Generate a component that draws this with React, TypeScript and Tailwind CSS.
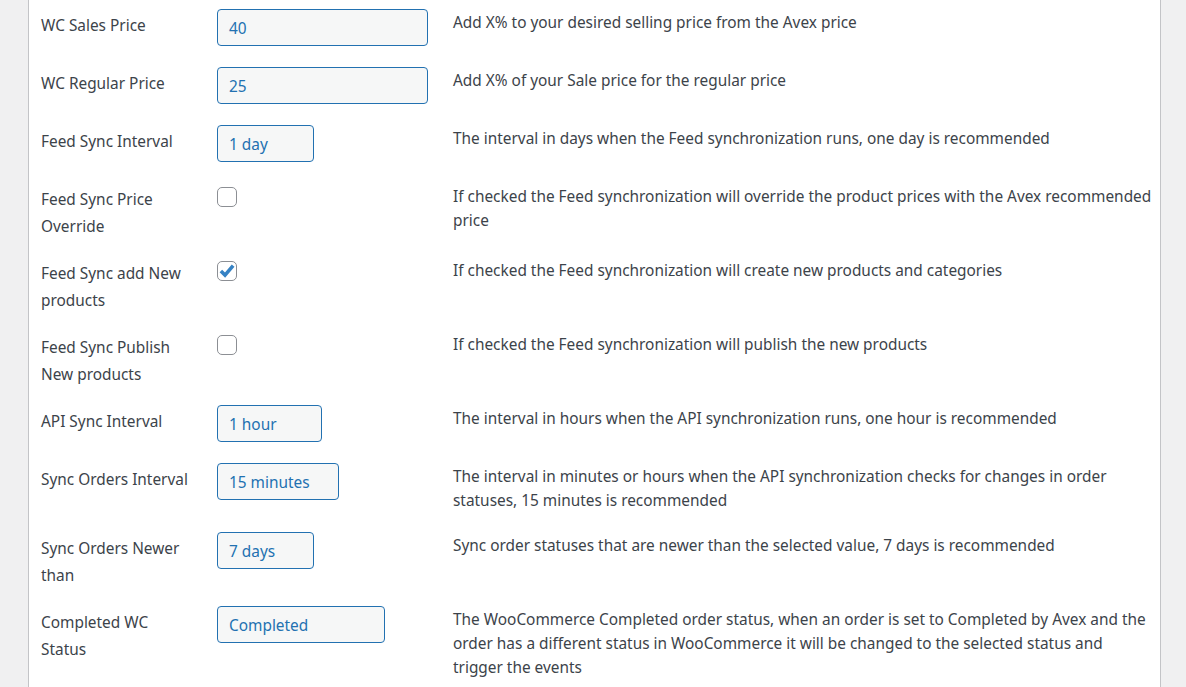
import React from 'react';

type Row = {
  label: string[];
  kind: 'select' | 'checkbox';
  value?: string;
  width?: string;
  checked?: boolean;
  desc: string[];
};

const rows: Row[] = [
  { label: ['WC Sales Price'], kind: 'select', value: '40', width: 'w-[211px]', desc: ['Add X% to your desired selling price from the Avex price'] },
  { label: ['WC Regular Price'], kind: 'select', value: '25', width: 'w-[211px]', desc: ['Add X% of your Sale price for the regular price'] },
  { label: ['Feed Sync Interval'], kind: 'select', value: '1 day', width: 'w-[97px]', desc: ['The interval in days when the Feed synchronization runs, one day is recommended'] },
  {
    label: ['Feed Sync Price', 'Override'],
    kind: 'checkbox',
    checked: false,
    desc: ['If checked the Feed synchronization will override the product prices with the Avex recommended', 'price'],
  },
  { label: ['Feed Sync add New', 'products'], kind: 'checkbox', checked: true, desc: ['If checked the Feed synchronization will create new products and categories'] },
  { label: ['Feed Sync Publish', 'New products'], kind: 'checkbox', checked: false, desc: ['If checked the Feed synchronization will publish the new products'] },
  { label: ['API Sync Interval'], kind: 'select', value: '1 hour', width: 'w-[105px]', desc: ['The interval in hours when the API synchronization runs, one hour is recommended'] },
  {
    label: ['Sync Orders Interval'],
    kind: 'select',
    value: '15 minutes',
    width: 'w-[122px]',
    desc: ['The interval in minutes or hours when the API synchronization checks for changes in order', 'statuses, 15 minutes is recommended'],
  },
  { label: ['Sync Orders Newer', 'than'], kind: 'select', value: '7 days', width: 'w-[97px]', desc: ['Sync order statuses that are newer than the selected value, 7 days is recommended'] },
  {
    label: ['Completed WC', 'Status'],
    kind: 'select',
    value: 'Completed',
    width: 'w-[168px]',
    desc: [
      'The WooCommerce Completed order status, when an order is set to Completed by Avex and the',
      'order has a different status in WooCommerce it will be changed to the selected status and',
      'trigger the events',
    ],
  },
];

const Checkbox: React.FC<{ checked?: boolean }> = ({ checked }) => (
  <div className="mt-[4px] w-[20px] h-[20px] rounded-[5px] border border-[#8c8f94] bg-white flex items-center justify-center">
    {checked && (
      <svg width="18" height="18" viewBox="0 0 20 20">
        <path d="M3.2 10 L7.8 14.6 L16.8 4" fill="none" stroke="#3582c4" strokeWidth="4" />
      </svg>
    )}
  </div>
);

export default function App() {
  return (
    <div className="flex h-[687px] overflow-hidden bg-[#f0f0f1] text-[15.4px] text-[#3c434a]" style={{ fontFamily: '"Noto Sans", "Open Sans", sans-serif' }}>
      <div className="w-[28px] shrink-0" />
      <div className="w-[1133px] shrink-0 bg-white border-l border-r border-[#c3c4c7] pl-[12px] pr-[10px]">
        <div className="-mt-[1px]">
          {rows.map((row, i) => (
            <div key={i} className="flex items-start py-[10px]">
              <div className="w-[176px] shrink-0 leading-[27px] mt-[3px] -mb-[3px]">
                {row.label.map((l, j) => (
                  <div key={j} className="whitespace-nowrap">{l}</div>
                ))}
              </div>
              <div className="w-[236px] shrink-0">
                {row.kind === 'select' ? (
                  <div className={`${row.width} h-[37px] mb-[1px] rounded-[4px] border border-[#2271b1] bg-[#f6f7f7] pl-[11px] flex items-center pt-[3px] text-[#2271b1] whitespace-nowrap`}>
                    {row.value}
                  </div>
                ) : (
                  <Checkbox checked={row.checked} />
                )}
              </div>
              <div className="flex-1 leading-[24px] mt-[2px] -mb-[1px]">
                {row.desc.map((d, j) => (
                  <div key={j} className="whitespace-nowrap">{d}</div>
                ))}
              </div>
            </div>
          ))}
        </div>
      </div>
      <div className="flex-1" />
    </div>
  );
}
